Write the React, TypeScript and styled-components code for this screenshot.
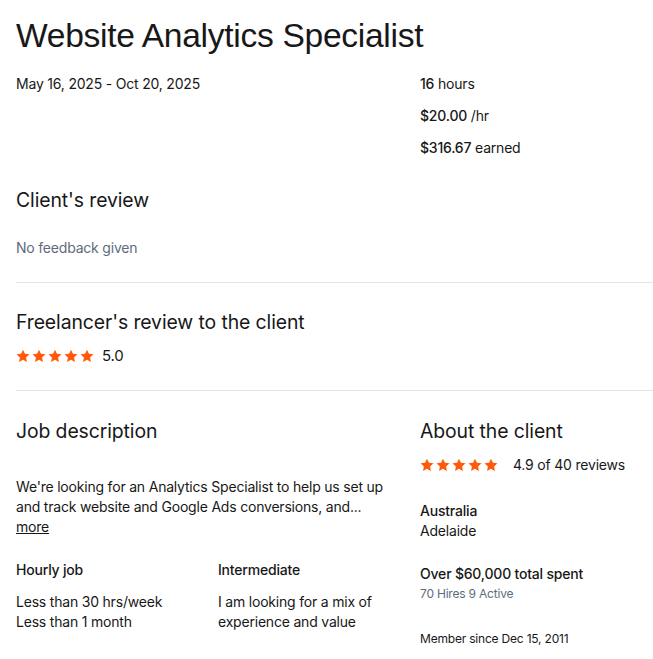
import React, { FC } from 'react'
import styled, { createGlobalStyle } from 'styled-components'

const GlobalStyle = createGlobalStyle`
    body {
        margin: 0;
        background: #ffffff;
        font-family: Inter, 'Liberation Sans', sans-serif;
        color: #181818;
        letter-spacing: -0.2px;
    }
`

const Page = styled.div`
    padding: 17px 0 0 16px;
`

const Title = styled.h1`
    margin: 0;
    font-family: 'Liberation Sans', Arial, sans-serif;
    font-size: 33.6px;
    font-weight: 400;
    letter-spacing: -0.3px;
    line-height: 38px;
`

const Columns = styled.div<{ $top: number }>`
    display: grid;
    grid-template-columns: 404px 1fr;
    margin-top: ${p => p.$top}px;
`

const Summary = styled(Columns)`
    font-size: 14px;
`

const MainColumn = styled.div`
    padding-right: 24px;
`

const DateRange = styled.div`
    line-height: 16px;
`

const Stats = styled.div`
    display: flex;
    flex-direction: column;
    gap: 16px;
    line-height: 16px;
`

const Strong = styled.span`
    font-weight: 500;
`

const Section = styled.section<{ $top: number; $bottom: number }>`
    margin-top: ${p => p.$top}px;
    padding-bottom: ${p => p.$bottom}px;
    border-bottom: 1px solid #e1e6ed;
`

const SectionTitle = styled.h2`
    margin: 0;
    font-size: 19.4px;
    font-weight: 400;
    letter-spacing: -0.1px;
    line-height: 24px;
`

const Muted = styled.p`
    margin: 28px 0 0;
    font-size: 14px;
    color: #5e6b7e;
    line-height: 16px;
`

const Rating = styled.div<{ $gap: number }>`
    display: flex;
    align-items: center;
    gap: ${p => p.$gap}px;
    margin-top: 13px;
    font-size: 15px;
    line-height: 18px;
`

const RatingText = styled.span<{ $size: number }>`
    font-size: ${p => p.$size}px;
`

const StarRow = styled.div`
    display: flex;
    gap: 2px;
`

const Body = styled.p<{ $top?: number }>`
    margin: ${p => p.$top ?? 0}px 0 0;
    font-size: 14px;
    line-height: 20px;
`

const MoreLink = styled.a`
    color: #181818;
    text-decoration: underline;
`

const Terms = styled.div`
    display: grid;
    grid-template-columns: 202px 1fr;
    margin-top: 23px;
`

const Label = styled.div`
    font-size: 14px;
    font-weight: 500;
    line-height: 20px;
    margin-bottom: 12px;
`

const ClientBlock = styled.div<{ $top: number }>`
    margin-top: ${p => p.$top}px;
    font-size: 14px;
    line-height: 20px;
`

const Small = styled.div<{ $muted?: boolean }>`
    font-size: 12px;
    line-height: 20px;
    color: ${p => (p.$muted ? '#5e6b7e' : '#181818')};
`

const Star: FC = () => (
    <svg width="14" height="14" viewBox="0 0 24 24">
        <path
            fill="#ff5a0a"
            d="M12 1.2l3.3 7.1 7.7.9-5.7 5.3 1.5 7.7L12 18.4l-6.8 3.8 1.5-7.7L1 9.2l7.7-.9z"
        />
    </svg>
)

const Stars: FC = () => (
    <StarRow>
        {[0, 1, 2, 3, 4].map(i => (
            <Star key={i} />
        ))}
    </StarRow>
)

const App: FC = () => (
    <>
        <GlobalStyle />
        <Page>
            <Title>Website Analytics Specialist</Title>
            <Summary $top={21}>
                <DateRange>May 16, 2025 - Oct 20, 2025</DateRange>
                <Stats>
                    <div>
                        <Strong>16</Strong> hours
                    </div>
                    <div>
                        <Strong>$20.00</Strong> /hr
                    </div>
                    <div>
                        <Strong>$316.67</Strong> earned
                    </div>
                </Stats>
            </Summary>

            <Section $top={32} $bottom={26}>
                <SectionTitle>Client's review</SectionTitle>
                <Muted>No feedback given</Muted>
            </Section>

            <Section $top={27} $bottom={25}>
                <SectionTitle>Freelancer's review to the client</SectionTitle>
                <Rating $gap={8}>
                    <Stars />
                    <RatingText $size={15}>5.0</RatingText>
                </Rating>
            </Section>

            <Columns $top={28}>
                <MainColumn>
                    <SectionTitle>Job description</SectionTitle>
                    <Body $top={34}>
                        We're looking for an Analytics Specialist to help us set up
                        and track website and Google Ads conversions, and...
                        <br />
                        <MoreLink>more</MoreLink>
                    </Body>
                    <Terms>
                        <div>
                            <Label>Hourly job</Label>
                            <Body>
                                Less than 30 hrs/week
                                <br />
                                Less than 1 month
                            </Body>
                        </div>
                        <div>
                            <Label>Intermediate</Label>
                            <Body>
                                I am looking for a mix of
                                <br />
                                experience and value
                            </Body>
                        </div>
                    </Terms>
                </MainColumn>
                <div>
                    <SectionTitle>About the client</SectionTitle>
                    <Rating $gap={15}>
                        <Stars />
                        <RatingText $size={14}>4.9 of 40 reviews</RatingText>
                    </Rating>
                    <ClientBlock $top={27}>
                        <Strong>Australia</Strong>
                        <div>Adelaide</div>
                    </ClientBlock>
                    <ClientBlock $top={23}>
                        <Strong>Over $60,000 total spent</Strong>
                        <Small $muted>70 Hires 9 Active</Small>
                    </ClientBlock>
                    <ClientBlock $top={25}>
                        <Small>Member since Dec 15, 2011</Small>
                    </ClientBlock>
                </div>
            </Columns>
        </Page>
    </>
)

export default App
